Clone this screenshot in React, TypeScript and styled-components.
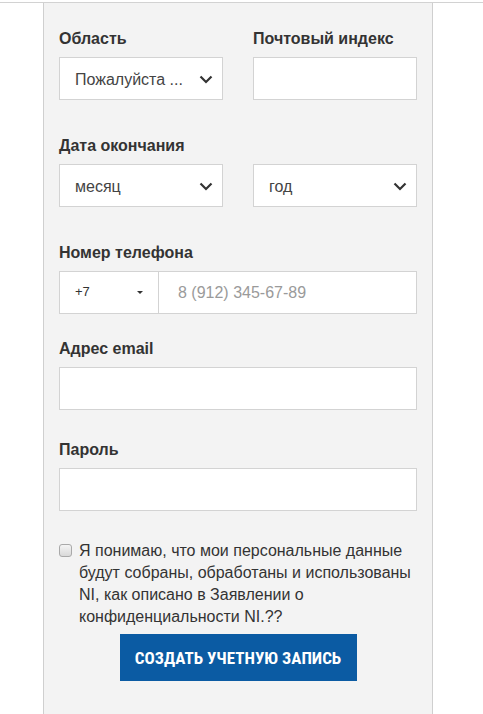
import React from "react";
import styled, { createGlobalStyle } from "styled-components";

const GlobalStyle = createGlobalStyle`
  html, body {
    margin: 0;
    background: #fff;
    font-family: "Liberation Sans", Arial, sans-serif;
    color: #333;
  }
`;

const Chevron: React.FC = () => (
  <svg width="14" height="9" viewBox="0 0 14 9" fill="none">
    <path d="M1.5 1.5 L7 7 L12.5 1.5" stroke="#333" strokeWidth="2.2" />
  </svg>
);

const App: React.FC = () => {
  return (
    <Page>
      <GlobalStyle />
      <TopLine />
      <Panel>
        <Row $gap={36}>
          <Field>
            <Label>Область</Label>
            <SelectBox>
              <SelectText>Пожалуйста ...</SelectText>
              <Chevron />
            </SelectBox>
          </Field>
          <Field>
            <Label>Почтовый индекс</Label>
            <InputBox />
          </Field>
        </Row>

        <Row $gap={36}>
          <Field>
            <Label>Дата окончания</Label>
            <SelectBox>
              <SelectText>месяц</SelectText>
              <Chevron />
            </SelectBox>
          </Field>
          <Field>
            <Label>&nbsp;</Label>
            <SelectBox>
              <SelectText>год</SelectText>
              <Chevron />
            </SelectBox>
          </Field>
        </Row>

        <Block $gap={25}>
          <Label>Номер телефона</Label>
          <PhoneBox>
            <CountryPart>
              <CountryCode>+7</CountryCode>
              <Caret />
            </CountryPart>
            <PhoneInput placeholder="8 (912) 345-67-89" />
          </PhoneBox>
        </Block>

        <Block $gap={30}>
          <Label>Адрес email</Label>
          <InputBox />
        </Block>

        <Block $gap={29}>
          <Label>Пароль</Label>
          <InputBox type="password" />
        </Block>

        <Consent>
          <Check type="checkbox" />
          <ConsentText>
            Я понимаю, что мои персональные данные будут собраны, обработаны и
            использованы NI, как описано в Заявлении о конфиденциальности NI.??
          </ConsentText>
        </Consent>

        <ButtonRow>
          <SubmitButton>Создать учетную запись</SubmitButton>
        </ButtonRow>
      </Panel>
    </Page>
  );
};

export default App;

const Page = styled.div`
  padding-top: 2px;
  min-height: 714px;
  box-sizing: border-box;
  display: flex;
  flex-direction: column;
`;

const TopLine = styled.div`
  height: 1px;
  background: #d2d2d2;
`;

const Panel = styled.div`
  flex: 1;
  margin-left: 43px;
  width: 390px;
  box-sizing: border-box;
  background: #f3f3f3;
  border-left: 1px solid #cfcfcf;
  border-right: 1px solid #cfcfcf;
  padding: 26px 15px 30px;
`;

const Row = styled.div<{ $gap: number }>`
  display: grid;
  grid-template-columns: 164px 164px;
  column-gap: 30px;
  margin-bottom: ${(p) => p.$gap}px;
`;

const Block = styled.div<{ $gap: number }>`
  margin-bottom: ${(p) => p.$gap}px;
`;

const Field = styled.div`
  display: flex;
  flex-direction: column;
`;

const Label = styled.div`
  font-size: 16px;
  line-height: 20px;
  font-weight: bold;
  color: #333;
  margin-bottom: 8px;
`;

const SelectBox = styled.div`
  height: 43px;
  box-sizing: border-box;
  background: #fff;
  border: 1px solid #d3d3d3;
  display: flex;
  align-items: center;
  justify-content: space-between;
  padding: 2px 9px 0 15px;
`;

const SelectText = styled.span`
  font-size: 16px;
  color: #444;
  white-space: nowrap;
`;

const InputBox = styled.input`
  display: block;
  width: 100%;
  height: 43px;
  box-sizing: border-box;
  background: #fff;
  border: 1px solid #d3d3d3;
  border-radius: 0;
  outline: none;
  margin: 0;
`;

const PhoneBox = styled.div`
  display: flex;
  height: 43px;
  box-sizing: border-box;
  background: #fff;
  border: 1px solid #d3d3d3;
`;

const CountryPart = styled.div`
  width: 99px;
  flex: none;
  box-sizing: border-box;
  border-right: 1px solid #d3d3d3;
  display: flex;
  align-items: center;
  justify-content: space-between;
  padding: 0 15px 0 15px;
`;

const CountryCode = styled.span`
  font-size: 13px;
  color: #333;
  margin-top: -3px;
`;

const Caret = styled.span`
  width: 0;
  height: 0;
  border-left: 3px solid transparent;
  border-right: 3px solid transparent;
  border-top: 3px solid #333;
`;

const PhoneInput = styled.input`
  flex: 1;
  min-width: 0;
  border: none;
  outline: none;
  background: transparent;
  padding: 0 0 0 19px;
  font-family: "Liberation Sans", Arial, sans-serif;
  font-size: 16px;
  color: #333;

  &::placeholder {
    color: #9a9a9a;
  }
`;

const Consent = styled.label`
  display: flex;
  align-items: flex-start;
  gap: 7px;
`;

const Check = styled.input`
  appearance: none;
  width: 13px;
  height: 13px;
  margin: 4px 0 0;
  flex: none;
  box-sizing: border-box;
  border: 1px solid #a9a9a9;
  border-radius: 3px;
  background: linear-gradient(#f4f4f4, #d9d9d9);
`;

const ConsentText = styled.span`
  font-size: 16px;
  line-height: 22px;
  color: #333;
`;

const ButtonRow = styled.div`
  display: flex;
  justify-content: center;
  margin-top: 6px;
`;

const SubmitButton = styled.button`
  width: 237px;
  height: 47px;
  border: none;
  border-radius: 0;
  background: #0b5ba3;
  color: #fff;
  font-family: "Liberation Sans Narrow", "Roboto Condensed", Roboto, sans-serif;
  font-weight: bold;
  font-size: 17px;
  text-transform: uppercase;
  padding: 0;
  cursor: pointer;
`;
